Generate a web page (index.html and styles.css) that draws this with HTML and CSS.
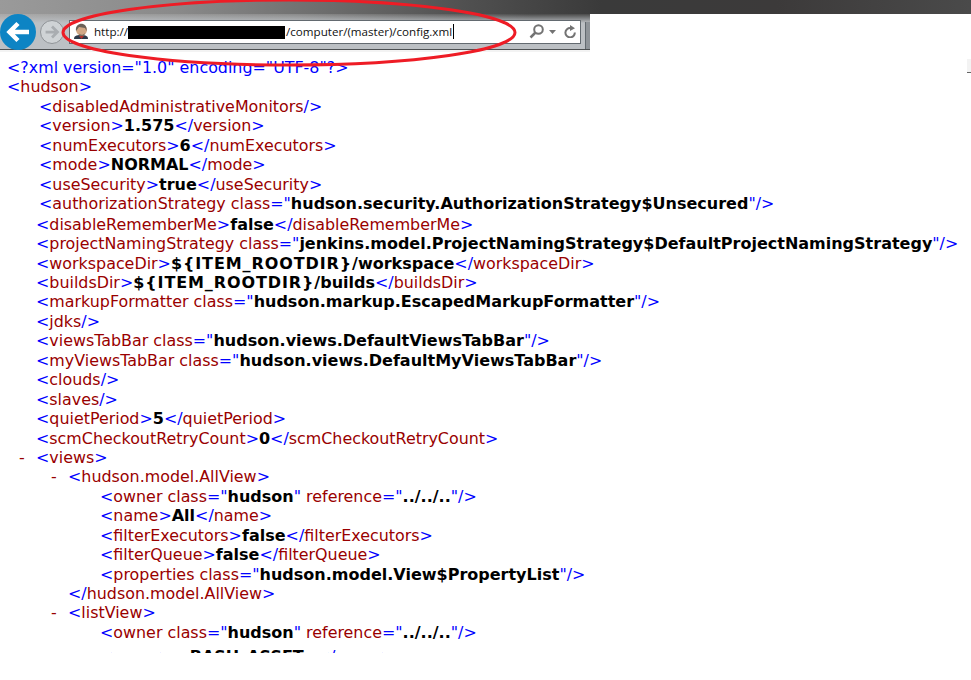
FILE: index.html
```html
<!DOCTYPE html>
<html lang="en">
<head>
<meta charset="utf-8">
<title>config.xml</title>
<link rel="stylesheet" href="styles.css">
</head>
<body>
<div class="shot">
  <div class="top-strip"></div>
  <header class="toolbar">
    <div class="back">
      <svg width="36" height="36" viewBox="0 0 36 36"><path d="M29 18H11M18 9.500L9.500 18l8.500 8.500" fill="none" stroke="#fff" stroke-width="4.500"/></svg>
    </div>
    <div class="forward">
      <svg width="24" height="24" viewBox="0 0 24 24"><path d="M5 12h13M12 6l6 6-6 6" fill="none" stroke="#a9adb1" stroke-width="3"/></svg>
    </div>
    <div class="address">
      <svg class="favicon" width="16" height="17" viewBox="0 0 16 17"><path d="M1 16c0-3 2-4 7-4s7 1 7 4z" fill="#2e3a4a"/><circle cx="8.500" cy="7" r="5.500" fill="#d2a886"/><path d="M3 8C2 2 7 0 10 1c3 1 4 4 3.500 7L12 5 6 4 4.500 6z" fill="#6b6158"/><path d="M5 9c1 3 5 4 7 1l-1 3H7z" fill="#7a6a5c"/><path d="M6 13h5l-2.500 3z" fill="#b3302a"/></svg>
      <span class="url">http://<span class="redacted"></span>/computer/(master)/config.xml</span><span class="caret"></span>
      <span class="addr-tools">
        <svg width="15" height="15" viewBox="0 0 15 15"><circle cx="9.500" cy="5.500" r="4.300" fill="none" stroke="#737373" stroke-width="2"/><path d="M6.500 8.500L1.500 13.500" stroke="#737373" stroke-width="2.500"/></svg>
        <svg width="7" height="4" viewBox="0 0 7 4"><path d="M0 0h7L3.500 4z" fill="#737373"/></svg>
        <svg class="refresh" width="12" height="13" viewBox="0 0 12 13"><path d="M10.800 7.500A4.700 4.700 0 1 1 6.500 3" fill="none" stroke="#737373" stroke-width="2"/><path d="M6 0l5 3.200L6 6z" fill="#737373"/></svg>
      </span>
    </div>
    <div class="tab-stub"></div>
  </header>
  <div class="edge-mark"></div>
  <main class="xml">
    <div class="line l0"><i>&lt;?xml version="1.0" encoding="UTF-8"?&gt;</i></div>
    <div class="line l0"><i>&lt;</i><u>hudson</u><i>&gt;</i></div>
    <div class="line l1"><i>&lt;</i><u>disabledAdministrativeMonitors</u><i>/&gt;</i></div>
    <div class="line l1"><i>&lt;</i><u>version</u><i>&gt;</i><b>1.575</b><i>&lt;/</i><u>version</u><i>&gt;</i></div>
    <div class="line l1"><i>&lt;</i><u>numExecutors</u><i>&gt;</i><b>6</b><i>&lt;/</i><u>numExecutors</u><i>&gt;</i></div>
    <div class="line l1"><i>&lt;</i><u>mode</u><i>&gt;</i><b>NORMAL</b><i>&lt;/</i><u>mode</u><i>&gt;</i></div>
    <div class="line l1"><i>&lt;</i><u>useSecurity</u><i>&gt;</i><b>true</b><i>&lt;/</i><u>useSecurity</u><i>&gt;</i></div>
    <div class="line l1"><i>&lt;</i><u>authorizationStrategy class</u><i>="</i><b>hudson.security.AuthorizationStrategy$Unsecured</b><i>"/&gt;</i></div>
    <div class="line l2 section"><i>&lt;</i><u>disableRememberMe</u><i>&gt;</i><b>false</b><i>&lt;/</i><u>disableRememberMe</u><i>&gt;</i></div>
    <div class="line l2"><i>&lt;</i><u>projectNamingStrategy class</u><i>="</i><b>jenkins.model.ProjectNamingStrategy$DefaultProjectNamingStrategy</b><i>"/&gt;</i></div>
    <div class="line l2"><i>&lt;</i><u>workspaceDir</u><i>&gt;</i><b><span class="caps">${ITEM_ROOTDIR}</span>/workspace</b><i>&lt;/</i><u>workspaceDir</u><i>&gt;</i></div>
    <div class="line l2"><i>&lt;</i><u>buildsDir</u><i>&gt;</i><b><span class="caps">${ITEM_ROOTDIR}</span>/builds</b><i>&lt;/</i><u>buildsDir</u><i>&gt;</i></div>
    <div class="line l2"><i>&lt;</i><u>markupFormatter class</u><i>="</i><b>hudson.markup.EscapedMarkupFormatter</b><i>"/&gt;</i></div>
    <div class="line l2"><i>&lt;</i><u>jdks</u><i>/&gt;</i></div>
    <div class="line l2"><i>&lt;</i><u>viewsTabBar class</u><i>="</i><b>hudson.views.DefaultViewsTabBar</b><i>"/&gt;</i></div>
    <div class="line l2"><i>&lt;</i><u>myViewsTabBar class</u><i>="</i><b>hudson.views.DefaultMyViewsTabBar</b><i>"/&gt;</i></div>
    <div class="line l2"><i>&lt;</i><u>clouds</u><i>/&gt;</i></div>
    <div class="line l2"><i>&lt;</i><u>slaves</u><i>/&gt;</i></div>
    <div class="line l2"><i>&lt;</i><u>quietPeriod</u><i>&gt;</i><b>5</b><i>&lt;/</i><u>quietPeriod</u><i>&gt;</i></div>
    <div class="line l2"><i>&lt;</i><u>scmCheckoutRetryCount</u><i>&gt;</i><b>0</b><i>&lt;/</i><u>scmCheckoutRetryCount</u><i>&gt;</i></div>
    <div class="line l2"><s class="toggle">-</s><i>&lt;</i><u>views</u><i>&gt;</i></div>
    <div class="line l3"><s class="toggle">-</s><i>&lt;</i><u>hudson.model.AllView</u><i>&gt;</i></div>
    <div class="line l4"><i>&lt;</i><u>owner class</u><i>="</i><b>hudson</b><i>"</i> <u>reference</u><i>="</i><b>../../..</b><i>"/&gt;</i></div>
    <div class="line l4"><i>&lt;</i><u>name</u><i>&gt;</i><b>All</b><i>&lt;/</i><u>name</u><i>&gt;</i></div>
    <div class="line l4"><i>&lt;</i><u>filterExecutors</u><i>&gt;</i><b>false</b><i>&lt;/</i><u>filterExecutors</u><i>&gt;</i></div>
    <div class="line l4"><i>&lt;</i><u>filterQueue</u><i>&gt;</i><b>false</b><i>&lt;/</i><u>filterQueue</u><i>&gt;</i></div>
    <div class="line l4"><i>&lt;</i><u>properties class</u><i>="</i><b>hudson.model.View$PropertyList</b><i>"/&gt;</i></div>
    <div class="line l3"><i>&lt;/</i><u>hudson.model.AllView</u><i>&gt;</i></div>
    <div class="line l3"><s class="toggle">-</s><i>&lt;</i><u>listView</u><i>&gt;</i></div>
    <div class="line l4"><i>&lt;</i><u>owner class</u><i>="</i><b>hudson</b><i>"</i> <u>reference</u><i>="</i><b>../../..</b><i>"/&gt;</i></div>
    <div class="line l4 cut"><i>&lt;</i><u>name</u><i>&gt;</i><b class="cut-value">BASH_ASSET</b><i>&lt;/</i><u>name</u><i>&gt;</i></div>
  </main>
  <svg class="ring" width="971" height="70" viewBox="0 0 971 70"><ellipse cx="289" cy="32.500" rx="226" ry="32.500" fill="none" stroke="#ee1c25" stroke-width="3"/></svg>
</div>
</body>
</html>
```
FILE: styles.css
```css
html, body { margin: 0; padding: 0; background: #fff; }
.shot { position: relative; width: 971px; height: 680px; overflow: hidden; display: flex; flex-direction: column; }
.top-strip { height: 14px; flex: none; background: linear-gradient(90deg, #9a9a9a 0, #8a8a8a 18%, #6a6a6a 35%, #505050 48%, #3a3a3a 62%, #3c3a3a 80%, #4a4a4a 100%); }
.toolbar { flex: none; width: 590px; height: 36px; box-sizing: border-box; display: flex; align-items: center; background: linear-gradient(180deg, rgba(188,192,196,0) 0, #bcc0c4 9px), linear-gradient(90deg, #a8a8a8 0, #8a8a8a 50%, #4a4a4a 90%); border-bottom: 1px solid #4d5052; box-shadow: 0 2px 0 #f3f3f3; }
.back { width: 36px; height: 36px; border-radius: 50%; background: #0d84c4; display: flex; align-items: center; justify-content: center; flex: none; margin-top: 1px; }
.forward { width: 24px; height: 24px; border-radius: 50%; border: 1px solid #8f9397; background: #cfd3d6; margin-left: 4px; display: flex; align-items: center; justify-content: center; flex: none; box-sizing: border-box; }
.address { margin-left: 5px; width: 512px; height: 24px; box-sizing: border-box; background: #fff; border: 1px solid #636a70; display: flex; align-items: center; padding-left: 3px; flex: none; }
.favicon { flex: none; }
.url { font: 11.6px "Open Sans", "Liberation Sans", sans-serif; color: #111; margin-left: 5px; white-space: nowrap; }
.redacted { display: inline-block; width: 157px; height: 13px; background: #000; vertical-align: -3px; margin-right: 1px; }
.caret { width: 1px; height: 15px; background: #000; margin-left: 1px; }
.addr-tools { margin-left: auto; display: flex; align-items: center; gap: 5px; padding-right: 4px; }
.refresh { margin-left: 3px; }
.tab-stub { width: 5px; height: 27px; background: #8f9499; margin-left: 4px; flex: none; align-self: flex-end; border-left: 1px solid #636a70; box-sizing: border-box; }
.edge-mark { position: absolute; right: 0; top: 59px; width: 4px; height: 13px; background: #f3f3f3; border-bottom: 1px solid #666; }
.xml { flex: none; height: 603px; overflow: hidden; padding-top: 7.9px; box-sizing: border-box; font: 15.9px/19.45px "DejaVu Sans", Verdana, sans-serif; }
.line { height: 19.45px; position: relative; white-space: pre; }
.section { margin-top: 1.3px; }
.cut { margin-top: 5px; }
.line i { font-style: normal; color: #0000ff; }
.line u { text-decoration: none; color: #990000; }
.line b { font-size: 16px; font-weight: 700; color: #000; }
.line .caps { letter-spacing: 0.9px; }
.line .cut-value { margin: 0 13px 0 18px; }
.line s { text-decoration: none; color: #990000; position: absolute; margin-left: -17px; }
.l0 { padding-left: 7px; }
.l1 { padding-left: 39px; }
.l2 { padding-left: 36px; }
.l3 { padding-left: 68px; }
.l4 { padding-left: 100px; }
.ring { position: absolute; left: 0; top: 0; }
```
